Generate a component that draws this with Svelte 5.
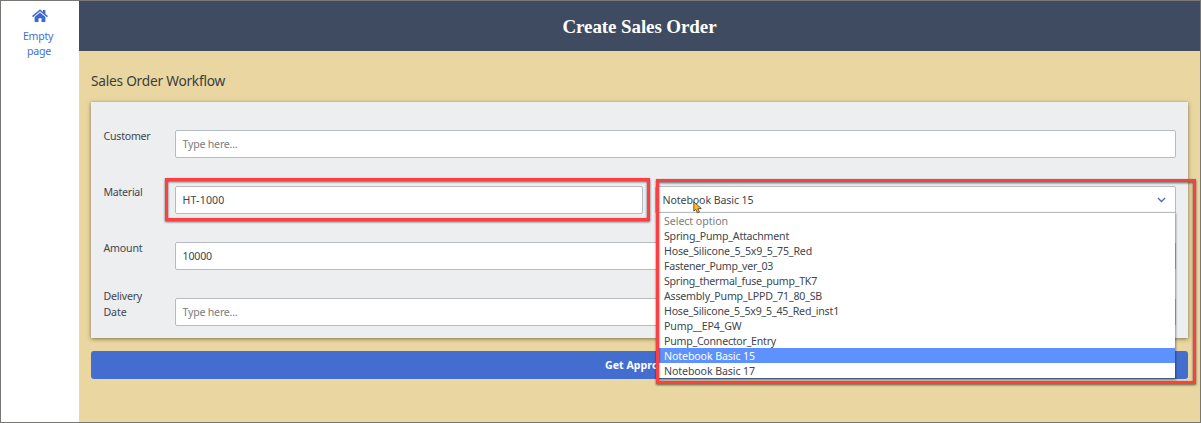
<script>
  const fields = [
    { label: [['Customer', 47]], text: 'Type here...', width: 55, muted: true },
    { label: [['Material', 39]], text: 'HT-1000', width: 42, select: true },
    { label: [['Amount', 39]], text: '10000', width: 29.5 },
    { label: [['Delivery', 38.5], ['Date', 23]], text: 'Type here...', width: 55, muted: true }
  ];
  const options = [
    ['Select option', 64],
    ['Spring_Pump_Attachment', 125],
    ['Hose_Silicone_5_5x9_5_75_Red', 148],
    ['Fastener_Pump_ver_03', 109],
    ['Spring_thermal_fuse_pump_TK7', 153],
    ['Assembly_Pump_LPPD_71_80_SB', 158],
    ['Hose_Silicone_5_5x9_5_45_Red_inst1', 175],
    ['Pump__EP4_GW', 77.5],
    ['Pump_Connector_Entry', 112],
    ['Notebook Basic 15', 91],
    ['Notebook Basic 17', 91]
  ];

  // Tracks the text out to the given width.
  function fit(node, width) {
    const natural = node.getBoundingClientRect().width;
    node.style.letterSpacing = `${(width - natural) / node.textContent.length}px`;
  }
</script>

<div class="app">
  <nav>
    <svg width="16" height="14" viewBox="0 0 16 14">
      <path d="M8 3.4 2.6 8v4.6c0 .3.2.5.5.5h3.4V9.2h3v3.9h3.4c.3 0 .5-.2.5-.5V8z" />
      <path d="M0 7.1 7.2.9c.4-.4 1.2-.4 1.6 0L11 2.8V1h2.4v3.9L16 7.1l-1 1.1L8 2.3 1 8.2z" />
    </svg>
    <span class="nav-text"><span use:fit={30}>Empty</span></span>
    <span class="nav-text second"><span use:fit={24}>page</span></span>
  </nav>
  <main>
    <header><span use:fit={154}>Create Sales Order</span></header>
    <section>
      <h2><span use:fit={134}>Sales Order Workflow</span></h2>
      <div class="card">
        {#each fields as field}
          <div class="row">
            <div class="label" class:double={field.label.length > 1}>
              {#each field.label as [word, width]}
                <div><span use:fit={width}>{word}</span></div>
              {/each}
            </div>
            <div class="input" class:muted={field.muted}>
              <span use:fit={field.width}>{field.text}</span>
            </div>
            {#if field.select}
              <div class="input select">
                <span use:fit={91}>Notebook Basic 15</span>
                <svg width="9" height="6" viewBox="0 0 9 6"><path d="M1 1l3.5 3.5L8 1" /></svg>
              </div>
            {/if}
          </div>
        {/each}
      </div>
      <div class="button"><span use:fit={69}>Get Approval</span></div>
    </section>
  </main>

  <div class="menu">
    {#each options as [name, width], i}
      <div class="option" class:muted={i === 0} class:active={i === 9}>
        <span use:fit={width}>{name}</span>
      </div>
    {/each}
  </div>
  <div class="mark mark-input"></div>
  <div class="mark mark-select"></div>
  <svg class="cursor" width="9" height="13" viewBox="0 0 9 13">
    <path d="M.8.8v9.3l2.1-1.7 1.5 3.5 2-.9-1.5-3.3 3.4-.2z" />
  </svg>
</div>

<style>
  .app {
    position: relative;
    box-sizing: border-box;
    width: 1201px;
    height: 423px;
    display: flex;
    overflow: hidden;
    background: #fff;
    font: 10.6px/15px 'Noto Sans', 'Open Sans', sans-serif;
    color: #40464e;
  }
  .app::after {
    content: '';
    position: absolute;
    inset: 0;
    border: 1px solid #777773;
  }
  span { white-space: nowrap; }
  nav {
    width: 79px;
    display: flex;
    flex-direction: column;
    align-items: center;
    padding-top: 9px;
    box-sizing: border-box;
    color: #4570cf;
  }
  nav svg { fill: #3c68d0; margin-bottom: 6px; }
  .nav-text { padding-right: 3px; }
  .second { padding-right: 1px; }
  main { flex: 1; background: #e9d6a1; }
  header {
    height: 51px;
    box-sizing: border-box;
    padding: 3px 1px 0 0;
    display: flex;
    align-items: center;
    justify-content: center;
    background: #3e4b61;
    color: #fff;
    font: bold 19px/22px 'Liberation Serif', serif;
  }
  section { padding: 20px 13px 0 12px; }
  h2 {
    margin: 0 0 12px;
    font-size: 13.7px;
    line-height: 19px;
    font-weight: 400;
    color: #3b3e3e;
  }
  .card {
    box-sizing: border-box;
    height: 236px;
    padding: 28px 12px 12px 12.5px;
    display: flex;
    flex-direction: column;
    gap: 28px;
    background: #edeef0;
    box-shadow: 0 1px 4px rgba(70, 60, 30, 0.65);
  }
  .row { display: flex; height: 28px; }
  .label { width: 71px; flex: none; line-height: 16px; margin-top: -2px; }
  .double { margin-top: -10px; }
  .input {
    flex: 1;
    box-sizing: border-box;
    border: 1px solid #b7bbc1;
    border-radius: 2px;
    background: #fff;
    padding: 0 7px;
    line-height: 26px;
  }
  .muted { color: #7b7d80; }
  .row:has(.select) .input:not(.select) { flex: 0 0 468px; }
  .row .select {
    margin-left: 12px;
    display: flex;
    align-items: center;
    justify-content: space-between;
    padding-right: 9px;
  }
  .select svg { fill: none; stroke: #526cad; stroke-width: 1.4; }
  .button {
    margin-top: 13px;
    height: 28px;
    border-radius: 3px;
    background: #436ed0;
    color: #fff;
    font-weight: 700;
    line-height: 28px;
    text-align: center;
  }
  .menu {
    position: absolute;
    left: 658px;
    top: 212px;
    width: 517px;
    border-top: 1px solid #b7bbc1;
    border-bottom: 1px solid #445989;
    background: #fff;
    box-shadow: 1px 1px 2px rgba(0, 0, 0, 0.4);
  }
  .option { height: 15px; padding-left: 6px; line-height: 17px; }
  .active { background: #5c91fe; color: #fff; }
  .mark {
    position: absolute;
    box-sizing: border-box;
    border: 3px solid #fa4042;
    filter: drop-shadow(0 1px 1px rgba(0, 0, 0, 0.6));
  }
  .mark-input { left: 165px; top: 178px; width: 485px; height: 43px; }
  .mark-select { left: 656px; top: 179px; width: 540px; height: 205px; }
  .cursor {
    position: absolute;
    left: 693px;
    top: 201px;
    fill: #ffb91e;
    stroke: #4b3c28;
    stroke-width: 0.8;
  }
</style>
